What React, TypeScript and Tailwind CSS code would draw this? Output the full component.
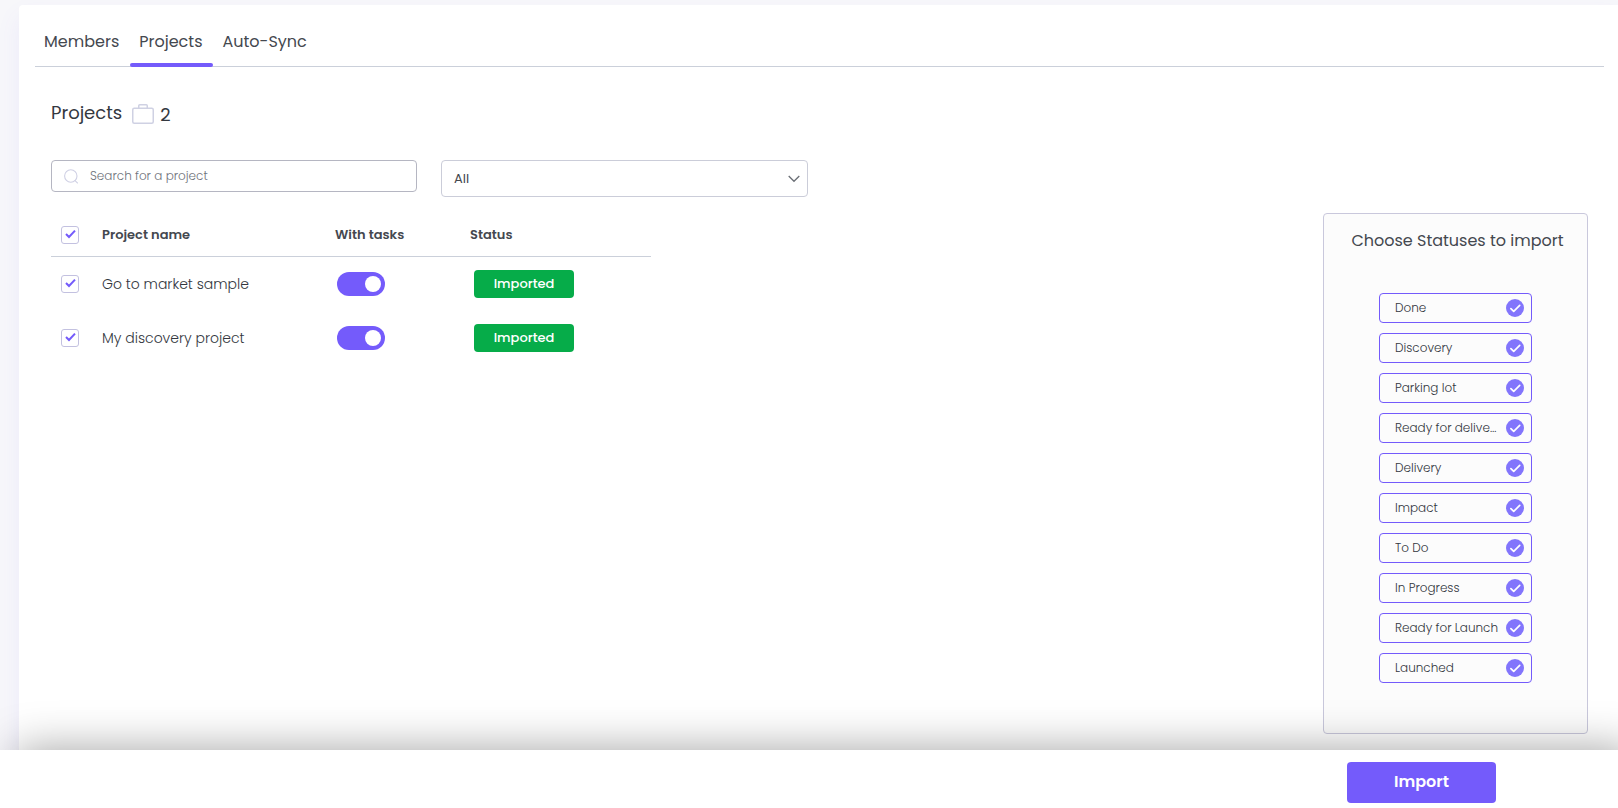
import { useState } from "react";

const TABS = ["Members", "Projects", "Auto-Sync"];

const PROJECTS = ["Go to market sample", "My discovery project"];

const STATUSES = [
  "Done",
  "Discovery",
  "Parking lot",
  "Ready for delivery",
  "Delivery",
  "Impact",
  "To Do",
  "In Progress",
  "Ready for Launch",
  "Launched",
];

function BriefcaseIcon() {
  return (
    <svg width="22" height="20" viewBox="0 0 22 20" fill="none" stroke="#cfd1e3" strokeWidth="1.5" aria-hidden="true">
      <rect x="0.75" y="4.25" width="20.5" height="15" rx="1.5" />
      <path d="M6.75 4.25V1.75a1 1 0 0 1 1-1h6.5a1 1 0 0 1 1 1v2.5" />
    </svg>
  );
}

function SearchIcon() {
  return (
    <svg width="14" height="15" viewBox="0 0 14 15" fill="none" stroke="#cfd0e4" strokeWidth="1.1" aria-hidden="true">
      <circle cx="6.8" cy="7" r="6.2" />
      <path d="M10.8 11.3l3 3" />
    </svg>
  );
}

function Checkbox({ label }: { label: string }) {
  return (
    <span className="relative block h-[18px] w-[18px]">
      <input
        type="checkbox"
        defaultChecked
        aria-label={label}
        className="peer block h-[18px] w-[18px] appearance-none rounded-[3px] border border-[#c3c1e0] bg-white"
      />
      <svg
        className="pointer-events-none absolute inset-0 hidden peer-checked:block"
        width="18"
        height="18"
        viewBox="0 0 18 18"
        fill="none"
        stroke="#745bfb"
        strokeWidth="2"
        aria-hidden="true"
      >
        <path d="M5 8l3 3 6-6.4" />
      </svg>
    </span>
  );
}

function Toggle({ label }: { label: string }) {
  return (
    <label className="relative block h-6 w-12">
      <input
        type="checkbox"
        role="switch"
        defaultChecked
        aria-label={label}
        className="peer block h-6 w-12 appearance-none rounded-full bg-gray-300 checked:bg-[#745bfb]"
      />
      <span className="pointer-events-none absolute top-1 left-1 h-4 w-4 rounded-full bg-white peer-checked:right-1 peer-checked:left-auto" />
    </label>
  );
}

function StatusOption({ name }: { name: string }) {
  return (
    <label className="flex h-[30px] w-[153px] items-center justify-between rounded border border-[#745bfb] pr-[7px] pl-[15px] text-[12px] font-light text-[#33373e]">
      <input type="checkbox" defaultChecked className="peer sr-only" />
      <span className="w-[104px] truncate">{name}</span>
      <svg className="mb-px hidden shrink-0 peer-checked:block" width="18" height="18" viewBox="0 0 18 18" fill="none" aria-hidden="true">
        <circle cx="9" cy="9" r="9" fill="#8275fc" />
        <path d="M4.9 9.7l2.8 2.7 6-6" stroke="#fff" strokeWidth="1.7" strokeLinecap="round" strokeLinejoin="round" />
      </svg>
    </label>
  );
}

export default function App() {
  const [tab, setTab] = useState("Projects");

  return (
    <div className="flex min-h-screen flex-col bg-[#f7f7fa] font-[Poppins,Inter,sans-serif] text-[#44484f]">
      <main className="flex flex-1 flex-col pt-[5px] pl-[19px]">
        <section className="flex-1 rounded-tl bg-white px-4 pb-4 shadow-[0_12px_24px_rgba(116,91,251,0.08)]">
          <nav className="mr-[-2px] flex h-[62px] items-stretch border-b border-[#cbd0da]">
            {TABS.map((name) => (
              <button
                key={name}
                type="button"
                onClick={() => setTab(name)}
                className="relative pt-3 pr-[11px] pl-[9px] text-[16px]"
              >
                {name}
                {tab === name && (
                  <span className="absolute inset-x-0 -bottom-px h-1 rounded-sm bg-[#745bfb]" />
                )}
              </button>
            ))}
          </nav>

          <div className="pl-4">
            <h1 className="mt-8 flex h-7 items-center text-[18px] text-[#34383f]">
              <span className="mb-0.5">Projects</span>
              <span className="mt-px mr-[6px] ml-[10px]">
                <BriefcaseIcon />
              </span>
              <span className="mt-0.5">2</span>
            </h1>

            <div className="mt-[33px] flex items-start gap-6">
              <label className="flex h-8 w-[366px] items-center gap-3 rounded border border-[#b5b6c2] px-3">
                <SearchIcon />
                <input
                  type="text"
                  aria-label="Search for a project"
                  placeholder="Search for a project"
                  className="min-w-0 flex-1 text-[12px] font-light outline-none placeholder:text-[#6f737b]"
                />
              </label>
              <div className="relative w-[367px]">
                <select
                  aria-label="Filter projects"
                  className="block h-[37px] w-full appearance-none rounded border border-[#cbcdd9] bg-white px-3 text-[13px]"
                >
                  <option>All</option>
                </select>
                <svg
                  className="pointer-events-none absolute top-[15px] right-2"
                  width="12"
                  height="8"
                  viewBox="0 0 12 8"
                  fill="none"
                  stroke="#6b6f76"
                  strokeWidth="1.3"
                  aria-hidden="true"
                >
                  <path d="M0.7 1l5.3 5.3L11.3 1" />
                </svg>
              </div>
            </div>

            <div className="mt-4 flex items-start justify-between pr-[14px]">
              <table className="w-[600px] table-fixed border-separate border-spacing-0 text-left">
                <thead>
                  <tr className="h-11 text-[13px] *:border-b *:border-[#cbd0da]">
                    <th className="w-[51px] pl-[10px]">
                      <Checkbox label="Select all projects" />
                    </th>
                    <th className="w-[233px] font-semibold">Project name</th>
                    <th className="w-[135px] font-semibold">With tasks</th>
                    <th className="font-semibold">Status</th>
                  </tr>
                </thead>
                <tbody>
                  {PROJECTS.map((name) => (
                    <tr key={name} className="h-[54px] text-[14px]">
                      <td className="pl-[10px]">
                        <Checkbox label={`Select ${name}`} />
                      </td>
                      <td className="font-light text-[#33373e]">{name}</td>
                      <td className="pl-[2px]">
                        <Toggle label={`Import tasks of ${name}`} />
                      </td>
                      <td className="pl-1">
                        <span className="flex h-7 w-[100px] items-center justify-center rounded bg-[#06ac49] pb-px text-[13px] font-medium text-white">
                          Imported
                        </span>
                      </td>
                    </tr>
                  ))}
                </tbody>
              </table>

              <aside className="flex h-[521px] w-[265px] flex-col items-center rounded border border-[#c9c8dc] bg-[#fcfcfc] pt-[15px]">
                <h2 className="pl-1 text-[16px] leading-6 whitespace-nowrap">Choose Statuses to import</h2>
                <div className="mt-10 flex flex-col gap-[10px]">
                  {STATUSES.map((name) => (
                    <StatusOption key={name} name={name} />
                  ))}
                </div>
              </aside>
            </div>
          </div>
        </section>
      </main>

      <footer className="relative flex h-[58px] items-start justify-end bg-white pt-3 pr-[122px] shadow-[16px_0_45px_rgba(0,0,0,0.37)]">
        <button
          type="button"
          className="h-[41px] w-[149px] rounded bg-[#745bfb] pb-0.5 text-[16px] font-semibold text-white"
        >
          Import
        </button>
      </footer>
    </div>
  );
}
